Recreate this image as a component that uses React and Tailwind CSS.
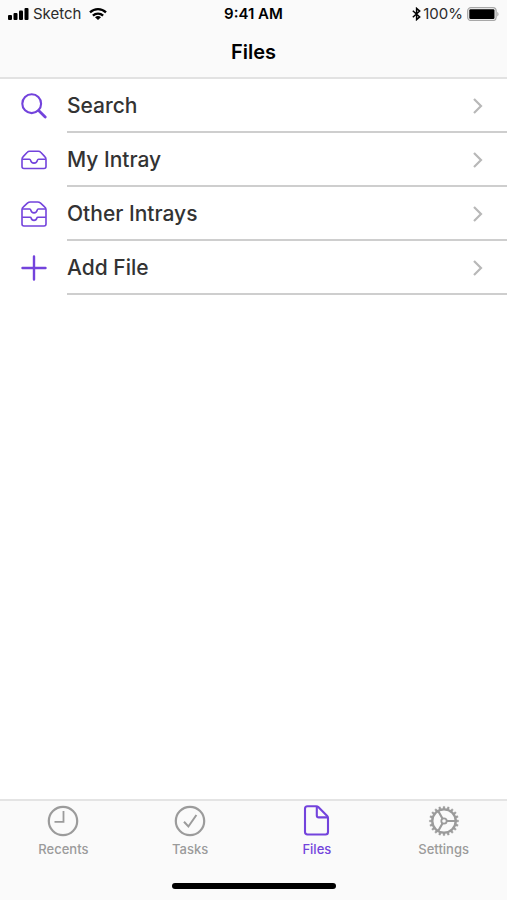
import { useState } from 'react';

function SignalIcon() {
  return (
    <svg width="21" height="12" viewBox="0 0 21 12" fill="currentColor" aria-hidden="true">
      <rect x="0" y="7" width="4" height="5" rx="1" />
      <rect x="5.5" y="5" width="4" height="7" rx="1" />
      <rect x="11" y="2.5" width="4" height="9.5" rx="1" />
      <rect x="16.5" y="0" width="4" height="12" rx="1" />
    </svg>
  );
}

function WifiIcon() {
  return (
    <svg width="18" height="12" viewBox="0 0 18 12" fill="none" stroke="currentColor" strokeWidth="2.3" aria-hidden="true">
      <path d="M1 4.4a11.6 11.6 0 0 1 16 0" />
      <path d="M3.9 7.6a7.4 7.4 0 0 1 10.2 0" />
      <path d="M9 12 6 9.3a4.4 4.4 0 0 1 6 0z" fill="currentColor" stroke="none" />
    </svg>
  );
}

function BluetoothIcon() {
  return (
    <svg width="9" height="14" viewBox="0 0 9 14" fill="none" stroke="currentColor" strokeWidth="1.5" aria-hidden="true">
      <path d="M.8 3.8 7.7 9.9 4.6 12.6V1.4l3.1 2.7L.8 10.2" />
    </svg>
  );
}

function BatteryIcon() {
  return (
    <svg width="32" height="14" viewBox="0 0 32 14" aria-hidden="true">
      <rect x=".7" y=".7" width="28.4" height="12.8" rx="3.2" fill="none" stroke="#a8a8a8" strokeWidth="1.3" />
      <rect x="2.3" y="2.3" width="25.2" height="9.6" rx="1.2" fill="#000" />
      <path d="M30.3 5v4.4c1.6-.6 1.6-3.8 0-4.4z" fill="#a8a8a8" />
    </svg>
  );
}

function SearchIcon() {
  return (
    <svg width="26" height="26" viewBox="0 0 26 26" fill="none" stroke="currentColor" aria-hidden="true">
      <circle cx="10.7" cy="10.7" r="9.4" strokeWidth="2.1" />
      <path d="m17.6 17.6 6.6 6.4" strokeWidth="2.8" strokeLinecap="round" />
    </svg>
  );
}

function IntrayIcon() {
  return (
    <svg width="26" height="26" viewBox="0 0 26 26" fill="none" stroke="currentColor" strokeWidth="1.6" strokeLinejoin="round" aria-hidden="true">
      <path d="M1 12.5c0-1.4.3-2 1.2-2.9l4.1-4.3q.9-1 2.3-1h8.8q1.4 0 2.3 1l4.1 4.3c.9.9 1.2 1.5 1.2 2.9v7q0 2-2 2H3q-2 0-2-2z" />
      <path d="M1.3 12.2h7.2q.8 0 1 .9c.9 4 6.100 4 7 0q.2-.9 1-.9h7.200" />
    </svg>
  );
}

function IntraysIcon() {
  return (
    <svg width="26" height="26" viewBox="0 0 26 26" fill="none" stroke="currentColor" strokeWidth="1.6" strokeLinejoin="round" aria-hidden="true">
      <path d="M1 8.5c0-1.3.4-1.9 1.4-2.7l4-3.6Q7.800 1 9.400 1h7.200q1.600 0 3 1.200l4 3.600c1 .8 1.400 1.400 1.400 2.700V23q0 2-2 2H3q-2 0-2-2z" />
      <path d="M1.200 8h7.500q.8 0 1 .9c.9 4 5.700 4 6.600 0q.2-.9 1-.9h7.500" />
      <path d="M1.200 16.300h8q.7 0 .9.700c.8 3.100 5 3.100 5.800 0q.2-.7.900-.7h8" />
    </svg>
  );
}

function PlusIcon() {
  return (
    <svg width="26" height="26" viewBox="0 0 26 26" fill="none" stroke="currentColor" strokeWidth="2.4" strokeLinecap="round" aria-hidden="true">
      <path d="M13 1.500v23M1.500 13h23" />
    </svg>
  );
}

function ChevronIcon() {
  return (
    <svg width="12" height="18" viewBox="0 0 12 18" fill="none" stroke="currentColor" strokeWidth="2.2" aria-hidden="true">
      <path d="m2 2 7 7-7 7" />
    </svg>
  );
}

function ClockIcon() {
  return (
    <svg width="32" height="32" viewBox="0 0 32 32" fill="none" stroke="currentColor" strokeWidth="2.2" aria-hidden="true">
      <circle cx="16" cy="16" r="14.2" />
      <path d="M16.500 6v10.800H7.500" strokeWidth="1.8" />
    </svg>
  );
}

function TasksIcon() {
  return (
    <svg width="32" height="32" viewBox="0 0 32 32" fill="none" stroke="currentColor" strokeWidth="2.2" aria-hidden="true">
      <circle cx="16" cy="16" r="14.2" />
      <path d="m10 16.800 4.400 4.700 8-11.500" strokeWidth="2" />
    </svg>
  );
}

function FileIcon() {
  return (
    <svg width="32" height="32" viewBox="0 0 32 32" fill="none" stroke="currentColor" strokeWidth="2.1" strokeLinejoin="round" aria-hidden="true">
      <path d="M6.500 1.200h8.800q1.200 0 2 .8l8.900 9.100q.8.800.8 2V27q0 2.500-2.500 2.500h-18Q4 29.500 4 27V3.700Q4 1.200 6.500 1.200z" />
      <path d="M15.800 1.400v9q0 2 2 2h8.900" />
    </svg>
  );
}

function SettingsIcon() {
  const teeth = Array.from({ length: 20 }, (_, i) => i * 18);
  return (
    <svg width="32" height="32" viewBox="0 0 32 32" fill="none" stroke="currentColor" aria-hidden="true">
      <circle cx="16" cy="16" r="11.7" strokeWidth="2.3" />
      {teeth.map((angle) => (
        <path key={angle} d="M14.900 4.200 15.200 1.400h1.600L17.100 4.200z" fill="currentColor" strokeWidth=".4" transform={`rotate(${angle} 16 16)`} />
      ))}
      <circle cx="16" cy="16" r="2.7" strokeWidth="1.8" />
      <path d="M18.700 16h9M14.600 13.700 10.200 6M14.600 18.300 10.200 26" strokeWidth="2.2" />
    </svg>
  );
}

const menuItems = [
  { label: 'Search', Icon: SearchIcon },
  { label: 'My Intray', Icon: IntrayIcon },
  { label: 'Other Intrays', Icon: IntraysIcon },
  { label: 'Add File', Icon: PlusIcon },
];

const tabs = [
  { label: 'Recents', Icon: ClockIcon },
  { label: 'Tasks', Icon: TasksIcon },
  { label: 'Files', Icon: FileIcon },
  { label: 'Settings', Icon: SettingsIcon },
];

export default function App() {
  const [activeTab, setActiveTab] = useState('Files');

  return (
    <div className="flex min-h-screen flex-col bg-white font-['Inter',sans-serif]">
      <header className="border-b-2 border-[#e2e2e2] bg-[#fafafa] text-black">
        <div className="grid h-7 grid-cols-3 items-center px-2 text-[15px]">
          <div className="flex items-center">
            <SignalIcon />
            <span className="ml-1 text-[#2b2b2b]">Sketch</span>
            <span className="ml-2"><WifiIcon /></span>
          </div>
          <div className="text-center font-semibold">9:41 AM</div>
          <div className="flex items-center justify-end">
            <BluetoothIcon />
            <span className="ml-0.5 mr-1 text-[#2b2b2b]">100%</span>
            <BatteryIcon />
          </div>
        </div>
        <h1 className="h-[49px] pt-2 text-center text-xl font-semibold leading-8">Files</h1>
      </header>

      <main className="flex-1">
        <ul>
          {menuItems.map(({ label, Icon }) => (
            <li key={label}>
              <a href="#" className="flex items-center pl-[21px]">
                <span className="mr-5 text-[#7343dc]"><Icon /></span>
                <span className="flex h-[54px] flex-1 items-center justify-between border-b-2 border-[#cecece] pt-0.5 pr-[23px] text-[21px] font-medium text-[#333]">
                  {label}
                  <span className="text-[#b8b8b8]"><ChevronIcon /></span>
                </span>
              </a>
            </li>
          ))}
        </ul>
      </main>

      <footer className="border-t-2 border-[#e4e4e4] bg-[#fafafa] pb-[11px]">
        <nav className="grid grid-cols-4 pt-1">
          {tabs.map(({ label, Icon }) => (
            <button type="button" key={label} onClick={() => setActiveTab(label)}
              className={`flex flex-col items-center gap-1 text-[13px] leading-4 font-medium ${
                activeTab === label ? 'text-[#7343dc]' : 'text-[#9b9b9b]'
              }`}>
              <Icon />
              {label}
            </button>
          ))}
        </nav>
        <div className="mx-auto mt-[26px] h-[6px] w-[164px] rounded-full bg-black" />
      </footer>
    </div>
  );
}
